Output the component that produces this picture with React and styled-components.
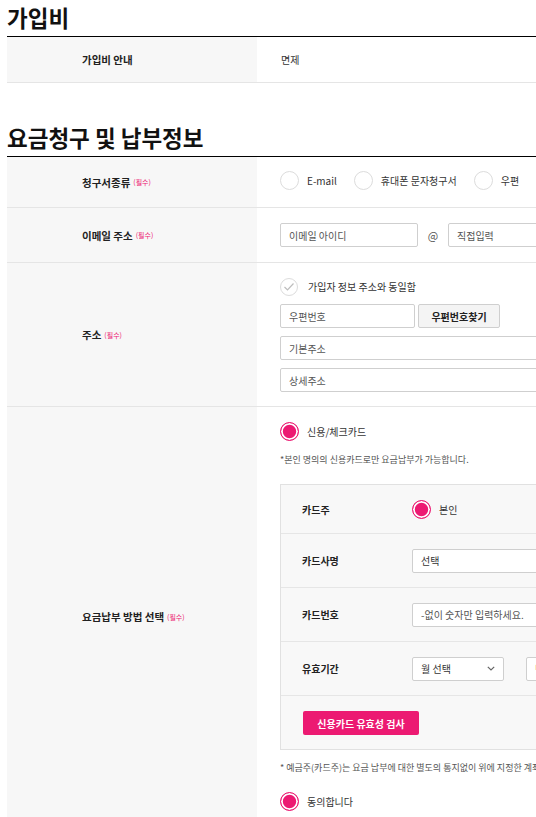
import React from "react";
import styled, { createGlobalStyle } from "styled-components";

const PINK = "#ec1a72";
const FONT = `"Noto Sans CJK KR", "Noto Sans", sans-serif`;

const Global = createGlobalStyle`
  html { overflow: hidden; }
  body { margin: 0; background: #fff; font-family: ${FONT}; color: #222; }
  * { box-sizing: border-box; }
`;

const Page = styled.div`
  width: 1100px;
  padding-left: 7px;
`;

const Title = styled.h2`
  margin: ${(p) => (p.$first ? "0" : "37px")} 0 0;
  padding: 3px 0 4px;
  font-size: 22.5px;
  line-height: 29px;
  font-weight: 700;
  letter-spacing: 0;
  color: #111;
  border-bottom: 1px solid #000;
`;

const Row = styled.div`
  display: grid;
  grid-template-columns: 250px 1fr;
  border-bottom: 1px solid #e5e5e5;
`;

const Th = styled.div`
  background: #f7f7f7;
  padding-left: 75px;
  display: flex;
  align-items: center;
  font-size: 10.5px;
  font-weight: 700;
  color: #222;
`;

const Req = styled.span`
  margin-left: 3px;
  font-size: 7px;
  font-weight: 400;
  color: ${PINK};
`;

const Td = styled.div`
  padding: ${(p) => p.$pad || "0"};
  padding-left: ${(p) => p.$left || "23px"};
  min-height: ${(p) => p.$h || "auto"};
  display: flex;
  flex-direction: column;
  justify-content: center;
  font-size: 10px;
  color: #333;
`;

const Line = styled.div`
  display: flex;
  align-items: center;
  gap: ${(p) => p.$gap || "0"};
  margin-top: ${(p) => p.$mt || "0"};
`;

const Choice = styled.label`
  display: flex;
  align-items: center;
  gap: ${(p) => p.$gap || "8px"};
  font-size: 10px;
  color: #333;
  line-height: 19px;
`;

const RadioDot = styled.span`
  flex: none;
  width: 19px;
  height: 19px;
  border-radius: 50%;
  border: ${(p) => (p.$on ? `1.5px solid ${PINK}` : "1px solid #dcdcdc")};
  background: ${(p) => (p.$on ? PINK : "#fff")};
  box-shadow: ${(p) => (p.$on ? "inset 0 0 0 1.8px #fff" : "none")};
`;

const CheckDot = styled.span`
  flex: none;
  width: 18px;
  height: 18px;
  border-radius: 50%;
  border: 1px solid #dcdcdc;
  display: flex;
  align-items: center;
  justify-content: center;
`;

const Input = styled.input`
  width: ${(p) => p.$w || "138px"};
  height: 24px;
  padding: 0 8px;
  border: 1px solid #cfcfcf;
  border-radius: 2px;
  background: #fff;
  font-family: ${FONT};
  font-size: 10px;
  color: #333;
  outline: none;
  &::placeholder {
    color: #555;
  }
`;

const At = styled.span`
  width: 30px;
  text-align: center;
  font-size: 11px;
  color: #555;
`;

const GrayButton = styled.button`
  margin-left: 3px;
  width: 82px;
  height: 24px;
  border: 1px solid #cfcfcf;
  border-radius: 2px;
  background: #f4f4f4;
  font-family: ${FONT};
  font-size: 10px;
  font-weight: 700;
  color: #222;
  padding: 0;
`;

const Note = styled.p`
  margin: ${(p) => p.$mt || "0"} 0 0;
  font-size: 9px;
  line-height: 13px;
  color: #555;
  white-space: nowrap;
`;

const CardBox = styled.div`
  margin-top: 18px;
  width: 620px;
  border: 1px solid #e1e1e1;
  background: #f8f8f8;
`;

const CardRow = styled.div`
  display: grid;
  grid-template-columns: 110px 1fr;
  align-items: center;
  padding-left: 21px;
  height: ${(p) => p.$h || "54px"};
  border-bottom: 1px solid #e6e6e6;
`;

const CardLabel = styled.div`
  font-size: 10px;
  font-weight: 700;
  color: #222;
`;

const ButtonRow = styled.div`
  padding: 15px 22px 14px;
`;

const PinkButton = styled.button`
  width: 116px;
  height: 24px;
  border: 0;
  border-radius: 2px;
  background: ${PINK};
  color: #fff;
  font-family: ${FONT};
  font-size: 10px;
  font-weight: 700;
  padding: 0;
`;

const Select = styled.div`
  width: ${(p) => p.$w || "300px"};
  height: 24px;
  margin-right: ${(p) => p.$mr || "0"};
  padding: 0 8px;
  border: 1px solid #cfcfcf;
  border-radius: 2px;
  background: #fff;
  display: flex;
  align-items: center;
  justify-content: space-between;
  font-size: 10px;
  color: #333;
`;

const Chevron = () => (
  <svg width="8" height="5" viewBox="0 0 8 5" fill="none">
    <polyline points="0.8,0.8 4,4 7.2,0.8" stroke="#666" strokeWidth="1.2" />
  </svg>
);

const Radio = ({ on, children, gap }) => (
  <Choice $gap={gap}>
    <RadioDot $on={on} />
    <span>{children}</span>
  </Choice>
);

export default function App() {
  return (
    <>
      <Global />
      <Page>
        <Title $first>가입비</Title>
        <Row>
          <Th>가입비 안내</Th>
          <Td $h="45px" $left="24px">면제</Td>
        </Row>

        <Title>요금청구 및 납부정보</Title>
        <Row>
          <Th>
            청구서종류<Req>(필수)</Req>
          </Th>
          <Td $pad="14px 0 17px">
            <Line $gap="17px">
              <Radio>E-mail</Radio>
              <Radio>휴대폰 문자청구서</Radio>
              <Radio>우편</Radio>
            </Line>
          </Td>
        </Row>
        <Row>
          <Th>
            이메일 주소<Req>(필수)</Req>
          </Th>
          <Td $pad="15px 0">
            <Line>
              <Input placeholder="이메일 아이디" />
              <At>@</At>
              <Input placeholder="직접입력" />
            </Line>
          </Td>
        </Row>
        <Row>
          <Th>
            주소<Req>(필수)</Req>
          </Th>
          <Td $pad="14px 0">
            <Choice $gap="10px">
              <CheckDot>
                <svg width="12" height="10" viewBox="0 0 12 10" fill="none">
                  <polyline
                    points="1.5,5 4.5,8 10.5,1.5"
                    stroke="#bdbdbd"
                    strokeWidth="1.2"
                  />
                </svg>
              </CheckDot>
              <span>가입자 정보 주소와 동일함</span>
            </Choice>
            <Line $mt="8px">
              <Input $w="135px" placeholder="우편번호" />
              <GrayButton>우편번호찾기</GrayButton>
            </Line>
            <Line $mt="8px">
              <Input $w="500px" placeholder="기본주소" />
            </Line>
            <Line $mt="8px">
              <Input $w="500px" placeholder="상세주소" />
            </Line>
          </Td>
        </Row>
        <Row>
          <Th>
            요금납부 방법 선택<Req>(필수)</Req>
          </Th>
          <Td $pad="15px 0">
            <Radio on>신용/체크카드</Radio>
            <Note $mt="12px">*본인 명의의 신용카드로만 요금납부가 가능합니다.</Note>
            <CardBox>
              <CardRow $h="49px">
                <CardLabel>카드주</CardLabel>
                <Radio on>본인</Radio>
              </CardRow>
              <CardRow>
                <CardLabel>카드사명</CardLabel>
                <Select>
                  <span>선택</span>
                  <Chevron />
                </Select>
              </CardRow>
              <CardRow>
                <CardLabel>카드번호</CardLabel>
                <Input $w="300px" placeholder="-없이 숫자만 입력하세요." />
              </CardRow>
              <CardRow>
                <CardLabel>유효기간</CardLabel>
                <Line>
                  <Select $w="92px" $mr="22px">
                    <span>월 선택</span>
                    <Chevron />
                  </Select>
                  <Select $w="92px">
                    <span>년 선택</span>
                    <Chevron />
                  </Select>
                </Line>
              </CardRow>
              <ButtonRow>
                <PinkButton>신용카드 유효성 검사</PinkButton>
              </ButtonRow>
            </CardBox>
            <Note $mt="11px">
              * 예금주(카드주)는 요금 납부에 대한 별도의 통지없이 위에 지정한 계좌(신용카드)에서 자동이체 됨을 동의합니다.
            </Note>
            <Line $mt="18px">
              <Radio on>동의합니다</Radio>
            </Line>
          </Td>
        </Row>
      </Page>
    </>
  );
}
